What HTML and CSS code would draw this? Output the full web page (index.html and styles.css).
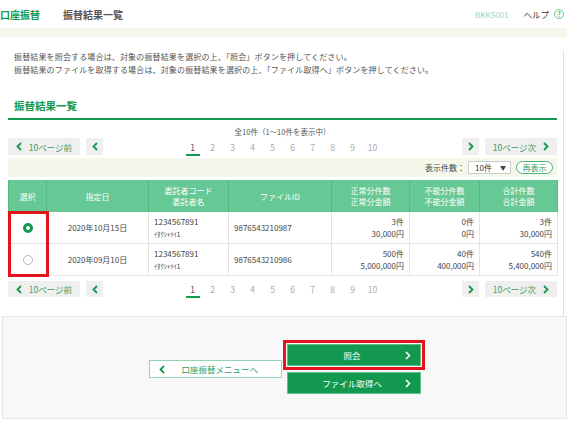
FILE: index.html
```html
<!DOCTYPE html>
<html lang="ja">
<head>
  <meta charset="UTF-8">
  <title>振替結果一覧</title>
  <link rel="stylesheet" href="styles.css">
</head>
<body>

<header class="top-bar">
  <span class="service">口座振替</span>
  <span class="page-title">振替結果一覧</span>
  <span class="screen-id">BKKS001</span>
  <span class="help">ヘルプ<span class="help-icon">?</span></span>
</header>
<div class="band"></div>

<main class="panel">
  <p class="guide">
    振替結果を照会する場合は、対象の振替結果を選択の上、「照会」ボタンを押してください。<br>
    振替結果のファイルを取得する場合は、対象の振替結果を選択の上、「ファイル取得へ」ボタンを押してください。
  </p>

  <h2 class="section-title">振替結果一覧</h2>

  <div class="count">全10件（1～10件を表示中）</div>

  <div class="pager">
    <div class="pager-side">
      <button class="pg-btn pg-wide" type="button">
        <svg width="6" height="9" viewBox="0 0 6 9"><polyline points="5,1 1.5,4.5 5,8" fill="none" stroke="#13994f" stroke-width="1.8"/></svg>
        <span>10ページ前</span>
      </button>
      <button class="pg-btn pg-small" type="button">
        <svg width="6" height="9" viewBox="0 0 6 9"><polyline points="5,1 1.5,4.5 5,8" fill="none" stroke="#13994f" stroke-width="1.8"/></svg>
      </button>
    </div>
    <div class="pages">
      <span class="current">1</span><span>2</span><span>3</span><span>4</span><span>5</span><span>6</span><span>7</span><span>8</span><span>9</span><span>10</span>
    </div>
    <div class="pager-side">
      <button class="pg-btn pg-small" type="button">
        <svg width="6" height="9" viewBox="0 0 6 9"><polyline points="1,1 4.5,4.5 1,8" fill="none" stroke="#13994f" stroke-width="1.8"/></svg>
      </button>
      <button class="pg-btn pg-wide" type="button">
        <span>10ページ次</span>
        <svg width="6" height="9" viewBox="0 0 6 9"><polyline points="1,1 4.5,4.5 1,8" fill="none" stroke="#13994f" stroke-width="1.8"/></svg>
      </button>
    </div>
  </div>

  <div class="display-row">
    <span class="display-label">表示件数：</span>
    <span class="select">10件<span class="arrow">▼</span></span>
    <button class="refresh" type="button">再表示</button>
  </div>

  <div class="table-wrap">
    <table class="results">
      <colgroup>
        <col class="w-sel">
        <col class="w-date">
        <col class="w-code">
        <col class="w-file">
        <col class="w-ok">
        <col class="w-ng">
        <col class="w-sum">
      </colgroup>
      <thead>
        <tr>
          <th>選択</th>
          <th>指定日</th>
          <th>委託者コード<br>委託者名</th>
          <th>ファイルID</th>
          <th>正常分件数<br>正常分金額</th>
          <th>不能分件数<br>不能分金額</th>
          <th>合計件数<br>合計金額</th>
        </tr>
      </thead>
      <tbody>
        <tr>
          <td class="sel"><span class="radio checked"></span></td>
          <td class="center">2020年10月15日</td>
          <td>1234567891<br><span class="kana">ｲﾀｸｼｬﾒｲ1</span></td>
          <td>9876543210987</td>
          <td class="num">3件<br>30,000円</td>
          <td class="num">0件<br>0円</td>
          <td class="num">3件<br>30,000円</td>
        </tr>
        <tr>
          <td class="sel"><span class="radio"></span></td>
          <td class="center">2020年09月10日</td>
          <td>1234567891<br><span class="kana">ｲﾀｸｼｬﾒｲ1</span></td>
          <td>9876543210986</td>
          <td class="num">500件<br>5,000,000円</td>
          <td class="num">40件<br>400,000円</td>
          <td class="num">540件<br>5,400,000円</td>
        </tr>
      </tbody>
    </table>
    <div class="select-mark"></div>
  </div>

  <div class="pager pager-bottom">
    <div class="pager-side">
      <button class="pg-btn pg-wide" type="button">
        <svg width="6" height="9" viewBox="0 0 6 9"><polyline points="5,1 1.5,4.5 5,8" fill="none" stroke="#13994f" stroke-width="1.8"/></svg>
        <span>10ページ前</span>
      </button>
      <button class="pg-btn pg-small" type="button">
        <svg width="6" height="9" viewBox="0 0 6 9"><polyline points="5,1 1.5,4.5 5,8" fill="none" stroke="#13994f" stroke-width="1.8"/></svg>
      </button>
    </div>
    <div class="pages">
      <span class="current">1</span><span>2</span><span>3</span><span>4</span><span>5</span><span>6</span><span>7</span><span>8</span><span>9</span><span>10</span>
    </div>
    <div class="pager-side">
      <button class="pg-btn pg-small" type="button">
        <svg width="6" height="9" viewBox="0 0 6 9"><polyline points="1,1 4.5,4.5 1,8" fill="none" stroke="#13994f" stroke-width="1.8"/></svg>
      </button>
      <button class="pg-btn pg-wide" type="button">
        <span>10ページ次</span>
        <svg width="6" height="9" viewBox="0 0 6 9"><polyline points="1,1 4.5,4.5 1,8" fill="none" stroke="#13994f" stroke-width="1.8"/></svg>
      </button>
    </div>
  </div>
</main>

<div class="actions">
  <button class="back-btn" type="button">
    <svg width="6" height="9" viewBox="0 0 6 9"><polyline points="5,1 1.5,4.5 5,8" fill="none" stroke="#13994f" stroke-width="1.8"/></svg>
    <span>口座振替メニューへ</span>
  </button>
  <div class="main-btns">
    <button class="go-btn marked" type="button">
      <span>照会</span>
      <svg width="6" height="9" viewBox="0 0 6 9"><polyline points="1,1 4.5,4.5 1,8" fill="none" stroke="#fff" stroke-width="1.6"/></svg>
    </button>
    <button class="go-btn" type="button">
      <span>ファイル取得へ</span>
      <svg width="6" height="9" viewBox="0 0 6 9"><polyline points="1,1 4.5,4.5 1,8" fill="none" stroke="#fff" stroke-width="1.6"/></svg>
    </button>
  </div>
</div>

</body>
</html>
```

FILE: styles.css
```css
body {
  margin: 0;
  width: 569px;
  background: #fff;
  font-family: "Noto Sans CJK JP", "Noto Sans", sans-serif;
  color: #444;
}

button {
  font-family: inherit;
  cursor: pointer;
}

/* header */
.top-bar {
  height: 28px;
  display: flex;
  align-items: center;
  font-size: 10px;
  font-weight: bold;
}

.service {
  color: #13994f;
  width: 63px;
}

.page-title {
  color: #555;
  flex: 1;
}

.screen-id {
  font-size: 8px;
  font-weight: normal;
  color: #9fd6b9;
  margin-right: 15px;
}

.help {
  display: flex;
  align-items: center;
  font-size: 8.5px;
  font-weight: normal;
  color: #333;
  margin-right: 5px;
}

.help-icon {
  width: 8px;
  height: 8px;
  margin-left: 5px;
  border: 1.5px solid #6cc696;
  border-radius: 50%;
  color: #4cb67c;
  font-size: 7px;
  font-weight: bold;
  line-height: 8px;
  text-align: center;
}

.band {
  height: 9px;
  background: #f4f7ea;
  margin-right: 2px;
}

/* main panel */
.panel {
  width: 549px;
  padding: 0 6px 19px 8px;
  border-right: 1px solid #e2e2e2;
}

.guide {
  margin: 13px 0 0 6px;
  font-size: 8px;
  line-height: 13px;
  letter-spacing: 0.15px;
  color: #555;
}

.section-title {
  margin: 23px 0 0;
  padding: 0 0 5px 6px;
  font-size: 10.5px;
  line-height: 14px;
  color: #13994f;
  border-bottom: 2px solid #13994f;
}

.count {
  margin-top: 7px;
  font-size: 7.5px;
  line-height: 10px;
  text-align: center;
  color: #555;
}

/* pager */
.pager {
  display: flex;
  align-items: center;
  height: 17px;
  margin-top: 1px;
}

.pager-side {
  display: flex;
  gap: 6px;
  width: 95px;
}

.pager-side:last-child {
  justify-content: flex-end;
}

.pg-btn {
  height: 17px;
  border: none;
  background: #efefef;
  display: flex;
  align-items: center;
  justify-content: center;
  gap: 7px;
  padding: 0;
  color: #3a9f66;
  font-size: 8.5px;
}

.pg-wide {
  width: 72px;
}

.pg-small {
  width: 17px;
}

.pages {
  flex: 1;
  display: flex;
  justify-content: center;
}

.pages span {
  width: 20px;
  text-align: center;
  font-size: 8.5px;
  line-height: 14px;
  color: #aaa;
}

.pages .current {
  color: #555;
  position: relative;
}

.pages .current::after {
  content: "";
  position: absolute;
  left: 3px;
  right: 3px;
  bottom: -2px;
  height: 2px;
  background: #13994f;
}

.pager-bottom {
  margin-top: 5px;
  height: 16px;
}

.pager-bottom .pg-btn {
  height: 16px;
}

/* display count row */
.display-row {
  margin-top: 3px;
  height: 19px;
  background: #f4f7ea;
  display: flex;
  align-items: center;
  justify-content: flex-end;
  padding-right: 4px;
  font-size: 8px;
}

.display-label {
  color: #444;
  margin-right: 3px;
}

.select {
  width: 43px;
  height: 13px;
  box-sizing: border-box;
  background: #fff;
  border: 1px solid #ccc;
  display: flex;
  align-items: center;
  justify-content: space-between;
  padding: 0 4px 0 6px;
  color: #333;
}

.arrow {
  font-size: 6px;
  color: #444;
}

.refresh {
  margin-left: 5px;
  width: 37px;
  height: 13px;
  padding: 0;
  background: #fff;
  border: 1px solid #49b57a;
  border-radius: 7px;
  color: #2e9e60;
  font-size: 8px;
  line-height: 11px;
}

/* table */
.table-wrap {
  position: relative;
  margin-top: 3px;
}

.results {
  width: 549px;
  border-collapse: collapse;
  table-layout: fixed;
  font-size: 8px;
}

.w-sel { width: 38px; }
.w-date { width: 102px; }
.w-code { width: 80px; }
.w-file { width: 103px; }
.w-ok { width: 78px; }
.w-ng { width: 70px; }
.w-sum { width: 78px; }

.results th {
  height: 32px;
  padding: 0;
  background: #66c894;
  color: #fff;
  font-weight: normal;
  line-height: 11px;
  border-left: 1px solid #55bb85;
  border-right: 1px solid #55bb85;
}

.results td {
  height: 31px;
  padding: 0 5px;
  line-height: 12px;
  border: 1px solid #e4e4e4;
  border-top: none;
  color: #444;
}

.results .sel {
  text-align: center;
  padding: 0;
}

.results .center {
  text-align: center;
}

.results .num {
  text-align: right;
}

.kana {
  font-size: 6.5px;
}

.radio {
  display: inline-block;
  width: 10px;
  height: 10px;
  box-sizing: border-box;
  border: 1px solid #b5b5b5;
  border-radius: 50%;
  background: #fff;
  vertical-align: middle;
}

.radio.checked {
  border: 3px solid #13994f;
  background: #fff;
}

.select-mark {
  position: absolute;
  left: 0;
  top: 31px;
  width: 41px;
  height: 66px;
  box-sizing: border-box;
  border: 3px solid #e3141c;
}

/* bottom actions */
.actions {
  margin-left: 2px;
  width: 565px;
  height: 103px;
  box-sizing: border-box;
  background: #f8f8f8;
  border: 1px solid #e6e6e6;
  border-top: 1px dotted #d6d6d6;
  display: flex;
  align-items: center;
  justify-content: center;
  gap: 5px;
  padding-top: 3px;
}

.back-btn {
  width: 133px;
  height: 18px;
  background: #fff;
  border: 1px solid #93d3b1;
  display: flex;
  align-items: center;
  padding: 0 0 0 9px;
  color: #2e9e60;
  font-size: 8.5px;
}

.back-btn span {
  margin-left: 17px;
}

.main-btns {
  display: flex;
  flex-direction: column;
  gap: 6px;
}

.go-btn {
  width: 134px;
  height: 22px;
  background: #13994f;
  border: 1px solid #62bf8c;
  color: #fff;
  font-size: 8.5px;
  display: flex;
  align-items: center;
  justify-content: space-between;
  padding: 0 9px 0 0;
}

.go-btn span {
  flex: 1;
  text-align: center;
  padding-left: 12px;
}

.go-btn.marked {
  outline: 3px solid #e3141c;
  outline-offset: 1px;
}
```
